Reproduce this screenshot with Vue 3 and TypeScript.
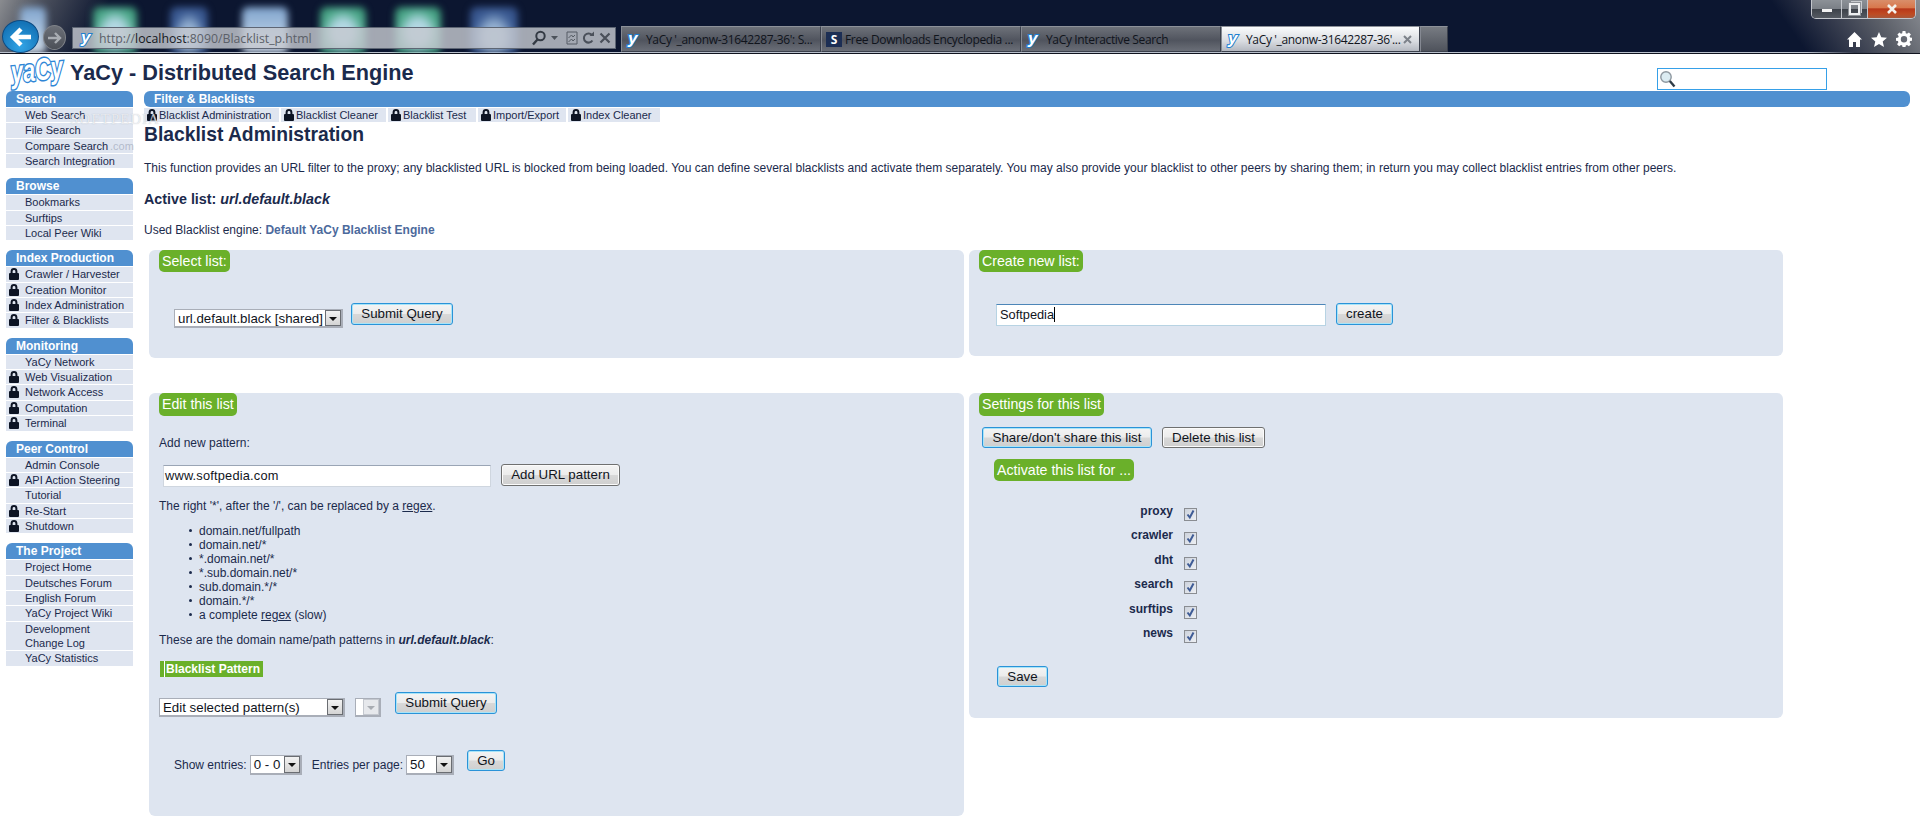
<script setup lang="ts">
interface NavItem { label: string; lock?: boolean }
interface NavGroup { title: string; items: NavItem[] }

const groups: NavGroup[] = [
  { title: 'Search', items: [{ label: 'Web Search' }, { label: 'File Search' }, { label: 'Compare Search' }, { label: 'Search Integration' }] },
  { title: 'Browse', items: [{ label: 'Bookmarks' }, { label: 'Surftips' }, { label: 'Local Peer Wiki' }] },
  { title: 'Index Production', items: [
    { label: 'Crawler / Harvester', lock: true }, { label: 'Creation Monitor', lock: true },
    { label: 'Index Administration', lock: true }, { label: 'Filter & Blacklists', lock: true }] },
  { title: 'Monitoring', items: [
    { label: 'YaCy Network' }, { label: 'Web Visualization', lock: true }, { label: 'Network Access', lock: true },
    { label: 'Computation', lock: true }, { label: 'Terminal', lock: true }] },
  { title: 'Peer Control', items: [
    { label: 'Admin Console' }, { label: 'API Action Steering', lock: true }, { label: 'Tutorial' },
    { label: 'Re-Start', lock: true }, { label: 'Shutdown', lock: true }] },
  { title: 'The Project', items: [
    { label: 'Project Home' }, { label: 'Deutsches Forum' }, { label: 'English Forum' }, { label: 'YaCy Project Wiki' },
    { label: 'Development Change Log' }, { label: 'YaCy Statistics' }] },
]

const subMenu = [
  { label: 'Blacklist Administration', width: 135 },
  { label: 'Blacklist Cleaner', width: 105 },
  { label: 'Blacklist Test', width: 88 },
  { label: 'Import/Export', width: 88 },
  { label: 'Index Cleaner', width: 92 },
]

const patterns = ['domain.net/fullpath', 'domain.net/*', '*.domain.net/*', '*.sub.domain.net/*', 'sub.domain.*/*', 'domain.*/*']
const activations = ['proxy', 'crawler', 'dht', 'search', 'surftips', 'news']
const thumbs = [
  { cls: 'pale', left: 20, width: 26 },
  { cls: 'green', left: 93, width: 44 },
  { cls: 'blue', left: 170, width: 38 },
  { cls: 'pale', left: 242, width: 46 },
  { cls: 'green', left: 320, width: 46 },
  { cls: 'green', left: 395, width: 46 },
  { cls: 'blue', left: 470, width: 48 },
]
const tabs = [
  { title: "YaCy '_anonw-31642287-36': S...", icon: 'y' },
  { title: 'Free Downloads Encyclopedia ...', icon: 's' },
  { title: 'YaCy Interactive Search', icon: 'y' },
]
</script>

<template>
  <div class="window">
    <svg class="defs" width="0" height="0" aria-hidden="true">
      <symbol id="lock" viewBox="0 0 10 12">
        <path d="M1.600 5V3.400a3.400 3.400 0 0 1 6.800 0V5h.6a1 1 0 0 1 1 1v5a1 1 0 0 1-1 1H1a1 1 0 0 1-1-1V6a1 1 0 0 1 1-1Zm2 0h2.800V3.400a1.400 1.400 0 0 0-2.800 0Z" fill="#0d1424" fill-rule="evenodd" />
      </symbol>
    </svg>

    <header class="chrome">
      <div v-for="(t, i) in thumbs" :key="i" class="thumb" :class="t.cls" :style="{ left: t.left + 'px', width: t.width + 'px' }"></div>
      <div class="corner"></div>

      <div class="controls">
        <span class="ctl min"><i></i></span>
        <span class="ctl restore"><i></i></span>
        <span class="ctl close">
          <svg width="14" height="10" viewBox="0 0 14 10"><path d="M3 1l8 8M11 1l-8 8" stroke="#f4f0ea" stroke-width="2.600" /></svg>
        </span>
      </div>

      <div class="nav-row">
        <span class="back">
          <svg width="24" height="22" viewBox="0 0 24 22"><path d="M22 11H5M12 3l-8 8 8 8" fill="none" stroke="#fff" stroke-width="4.400" /></svg>
        </span>
        <span class="forward">
          <svg width="16" height="14" viewBox="0 0 16 14"><path d="M1 7h12M8 2l5 5-5 5" fill="none" stroke="#a9adb3" stroke-width="2.400" /></svg>
        </span>

        <div class="address">
          <svg class="favicon" width="13" height="17" viewBox="0 0 13 17"><text x="1" y="13" class="fav-text">y</text></svg>
          <span class="url">http://<b>localhost</b>:8090/Blacklist_p.html</span>
          <span class="addr-tools">
            <svg width="16" height="16" viewBox="0 0 16 16"><circle cx="9.500" cy="6" r="4.200" fill="none" stroke="#333a44" stroke-width="2" /><path d="M6.500 9.500 2 14.500" stroke="#333a44" stroke-width="2.400" /></svg>
            <svg class="caret" width="7" height="4" viewBox="0 0 7 4"><path d="M0 0h7L3.500 4Z" fill="#4c525b" /></svg>
            <svg class="compat" width="12" height="14" viewBox="0 0 12 14"><path d="M1 1h10v12H1Z" fill="none" stroke="#555b64" /><path d="M2.500 7l3-3 1.500 2 2-2M2.500 11l3-3 1.500 2 2-2" fill="none" stroke="#555b64" /></svg>
            <svg width="13" height="14" viewBox="0 0 13 14"><path d="M10.400 9.500A4.600 4.600 0 1 1 10 4" fill="none" stroke="#4a505a" stroke-width="2" /><path d="M7.500 5H12V.5Z" fill="#4a505a" /></svg>
            <svg width="12" height="12" viewBox="0 0 12 12"><path d="M1.500 1.500l9 9M10.500 1.500l-9 9" stroke="#4a505a" stroke-width="2.200" /></svg>
          </span>
        </div>

        <div class="tabs">
          <div v-for="t in tabs" :key="t.title" class="tab">
            <svg v-if="t.icon === 'y'" class="favicon" width="13" height="17" viewBox="0 0 13 17"><text x="1" y="13" class="fav-text">y</text></svg>
            <span v-else class="s-icon">S</span>
            <span class="tab-title">{{ t.title }}</span>
          </div>
          <div class="tab active">
            <svg class="favicon" width="13" height="17" viewBox="0 0 13 17"><text x="1" y="13" class="fav-text">y</text></svg>
            <span class="tab-title">YaCy '_anonw-31642287-36'...</span>
            <svg class="tab-x" width="9" height="9" viewBox="0 0 9 9"><path d="M1 1l7 7M8 1 1 8" stroke="#7d828a" stroke-width="2" /></svg>
          </div>
          <div class="tab new-tab"></div>
        </div>

        <div class="tools">
          <svg width="15" height="15" viewBox="0 0 15 15"><path d="M7.500 0 15 7.500h-2V15H9v-5H6v5H2V7.500H0Z" fill="#fff" /></svg>
          <svg width="16" height="15" viewBox="0 0 16 15"><path d="M8 0l2.300 5.200 5.700.5-4.300 3.700 1.300 5.600L8 12l-5 3 1.300-5.600L0 5.700l5.700-.5Z" fill="#fff" /></svg>
          <svg width="16" height="16" viewBox="0 0 16 16"><path d="M6.600 0h2.800l.4 2.200 1.200.5L12.900 1.400l2 2-1.300 1.900.5 1.200 2.200.4v2.800l-2.200.4-.5 1.200 1.300 1.900-2 2-1.900-1.300-1.200.5-.4 2.200H6.600l-.4-2.200-1.200-.5-1.900 1.300-2-2 1.300-1.900-.5-1.200L0 9.700V6.900l2.200-.4.5-1.200L1.400 3.400l2-2L5 2.700l1.200-.5ZM8 5a3.200 3.200 0 1 0 0 6.400A3.200 3.200 0 0 0 8 5Z" fill="#fff" fill-rule="evenodd" /></svg>
        </div>
      </div>
    </header>

    <div class="page">
      <div class="watermark">SOFTPEDIA</div>
      <div class="watermark-small">.com</div>

      <div class="top">
        <svg class="logo" width="56" height="33" viewBox="0 0 56 33">
          <g transform="translate(2 27) rotate(-6) scale(1 1.150)">
            <text x="0" y="0" textLength="52" lengthAdjust="spacingAndGlyphs" class="logo-text">yaCy</text>
          </g>
        </svg>
        <h1>YaCy - Distributed Search Engine</h1>
        <div class="search-box">
          <svg width="17" height="18" viewBox="0 0 17 18">
            <circle cx="7" cy="7" r="5.200" fill="#dcecf2" stroke="#8d979f" stroke-width="1.400" />
            <path d="M10.800 11l4.700 5.500" stroke="#2f3b46" stroke-width="2.400" />
          </svg>
        </div>
      </div>

      <div class="columns">
        <nav class="sidebar">
          <section v-for="g in groups" :key="g.title" class="group">
            <h3>{{ g.title }}</h3>
            <a v-for="it in g.items" :key="it.label" class="nav-item">
              <svg v-if="it.lock" class="lock" width="10" height="12"><use href="#lock" /></svg>
              {{ it.label }}
            </a>
          </section>
        </nav>

        <main class="main">
          <div class="bar">Filter &amp; Blacklists</div>
          <div class="sub">
            <a v-for="s in subMenu" :key="s.label" class="sub-item" :style="{ width: s.width + 'px' }">
              <svg class="sub-lock" width="10" height="12"><use href="#lock" /></svg>{{ s.label }}
            </a>
          </div>

          <h2>Blacklist Administration</h2>
          <p class="intro">This function provides an URL filter to the proxy; any blacklisted URL is blocked from being loaded. You can define several blacklists and activate them separately. You may also provide your blacklist to other peers by sharing them; in return you may collect blacklist entries from other peers.</p>
          <h4>Active list: <em>url.default.black</em></h4>
          <p class="engine">Used Blacklist engine: <b>Default YaCy Blacklist Engine</b></p>

          <div class="panels">
            <section class="panel p-select">
              <div class="legend">Select list:</div>
              <div class="row select-row">
                <div class="sel s-list"><span>url.default.black [shared]</span><i class="arrow"></i></div>
                <button class="btn focus b-submit1">Submit Query</button>
              </div>
            </section>

            <section class="panel p-create">
              <div class="legend">Create new list:</div>
              <div class="row create-row">
                <div class="text-input create-input">Softpedia<i class="cursor"></i></div>
                <button class="btn focus b-create">create</button>
              </div>
            </section>

            <section class="panel p-edit">
              <div class="legend">Edit this list</div>
              <p class="t-add">Add new pattern:</p>
              <div class="row add-row">
                <div class="text-input add-input">www.softpedia.com</div>
                <button class="btn b-add">Add URL pattern</button>
              </div>
              <p class="t-right">The right '*', after the '/', can be replaced by a <a class="u">regex</a>.</p>
              <ul class="patterns">
                <li v-for="p in patterns" :key="p">{{ p }}</li>
                <li>a complete <a class="u">regex</a> (slow)</li>
              </ul>
              <p class="t-these">These are the domain name/path patterns in <b><em>url.default.black</em></b>:</p>
              <div class="pattern-head"><span>Blacklist Pattern</span></div>
              <div class="row action-row">
                <div class="sel s-action"><span>Edit selected pattern(s)</span><i class="arrow"></i></div>
                <div class="sel s-disabled"><span></span><i class="arrow off"></i></div>
                <button class="btn focus b-submit2">Submit Query</button>
              </div>
              <div class="row entries-row">
                <span class="lbl-show">Show entries:</span>
                <div class="sel s-range"><span>0 - 0</span><i class="arrow"></i></div>
                <span class="lbl-per">Entries per page:</span>
                <div class="sel s-per"><span>50</span><i class="arrow"></i></div>
                <button class="btn focus b-go">Go</button>
              </div>
            </section>

            <section class="panel p-settings">
              <div class="legend">Settings for this list</div>
              <div class="row settings-btns">
                <button class="btn focus b-share">Share/don't share this list</button>
                <button class="btn b-delete">Delete this list</button>
              </div>
              <div class="legend sub-legend">Activate this list for ...</div>
              <div class="checks">
                <template v-for="a in activations" :key="a">
                  <b class="check-label">{{ a }}</b>
                  <span class="check">
                    <svg width="11" height="11" viewBox="0 0 11 11"><path d="M2.500 5.500l2.300 3L8.500 1.500" fill="none" stroke="#3f5c96" stroke-width="2" /></svg>
                  </span>
                </template>
              </div>
              <button class="btn focus b-save">Save</button>
            </section>
          </div>
        </main>
      </div>
    </div>
  </div>
</template>

<style>
html, body { margin: 0; background: #fff; overflow: hidden; }
</style>

<style scoped>
.window { width: 1920px; height: 821px; overflow: hidden; font-family: "Liberation Sans", Arial, sans-serif; color: #1b2a4c; background: #fff; }
.defs { position: absolute; }

/* browser chrome */
.chrome { position: relative; height: 54px; box-sizing: border-box; overflow: hidden; background: linear-gradient(115deg, #8a8c90 0, #4a4f5c 40px, #0c1630 100px); border-bottom: 1px solid #10141f; box-shadow: inset 0 -1px 0 #b9c0cc; }
.thumb { position: absolute; top: 7px; height: 46px; border-radius: 6px; filter: blur(3.500px); }
.thumb.pale { background: linear-gradient(#7fa3cc, #a9c3df 50%, #cfdbe8); }
.thumb.green { background: radial-gradient(ellipse at 50% 55%, #b4d8e4 0 30%, #4ea98c 62%, #328a6c); }
.thumb.blue { background: radial-gradient(ellipse at 50% 65%, #98b4d4 0 28%, #3c5c94 60%, #2f4a80); }
.corner { position: absolute; right: 0; top: 0; width: 190px; height: 53px; background: linear-gradient(235deg, #8b8e94 0, #5c6069 24%, #343a4c 45%, rgba(12, 22, 48, 0) 66%); }

.controls { position: absolute; right: 4px; top: -1px; display: flex; height: 19px; border: 1px solid #c3c6cc; border-top: 0; border-radius: 0 0 5px 5px; overflow: hidden; }
.ctl { display: flex; align-items: center; justify-content: center; box-sizing: border-box; background: linear-gradient(#8e9399, #7b8087 50%, #3c4149 52%, #555a62); }
.min { width: 30px; border-right: 1px solid #c3c6cc; }
.min i { display: block; width: 10px; height: 3px; background: #f2f2f2; margin-top: 3px; }
.restore { width: 26px; border-right: 1px solid #c3c6cc; }
.restore i { display: block; width: 7px; height: 8px; border: 2px solid #eceef0; outline: 1px solid #8d9197; box-shadow: 2px -2px 0 0 #c9ccd0; }
.close { width: 47px; background: linear-gradient(#d9916e, #d8774c 46%, #b8381a 52%, #bf4a22 78%, #a8583a); }

.nav-row { position: relative; display: flex; align-items: flex-end; height: 53px; padding-left: 2px; }
.back { display: flex; align-items: center; justify-content: center; width: 37px; height: 33px; border-radius: 50%; background: radial-gradient(circle at 50% 80%, #32a4e6, #1474b8 75%); border: 1px solid #0c4a82; box-sizing: border-box; }
.forward { display: flex; align-items: center; justify-content: center; width: 23px; height: 25px; margin: 0 0 3px 4px; border-radius: 50%; background: linear-gradient(#6c7078, #4c5058); border: 1px solid #80848a; box-sizing: border-box; }
.address { display: flex; align-items: center; box-sizing: border-box; width: 544px; height: 22px; margin: 0 0 4px 6px; padding-left: 7px; background: rgba(196, 200, 208, 0.82); border: 1px solid #5e6674; }
.favicon { flex: none; overflow: visible; }
.fav-text { font: italic 700 17px "Liberation Sans", sans-serif; fill: #fff; stroke: #1f7fd0; stroke-width: 2; paint-order: stroke; }
.url { margin-left: 6px; font: 12.300px "Open Sans", sans-serif; color: #5b6068; }
.url b { font-weight: 400; color: #14171c; }
.addr-tools { display: flex; align-items: center; gap: 4px; margin-left: auto; padding: 0 4px 0 0; }
.caret { margin-right: 4px; }
.tabs { display: flex; align-items: stretch; height: 26px; margin: 0 0 1px 5px; }
.tab { display: flex; align-items: center; box-sizing: border-box; width: 200px; padding-left: 5px; background: linear-gradient(#6d7179, #50545e 55%, #6a6e77); border: 1px solid #3b404c; border-top-color: #8d9199; border-left-color: #858992; color: #10141c; font: 12px "Open Sans", sans-serif; letter-spacing: -0.350px; white-space: nowrap; overflow: hidden; }
.tab-title { margin-left: 6px; }
.tab.active { width: 199px; background: linear-gradient(#fafbfc, #d8dbe0 60%, #b4b8c0); position: relative; }
.tab-x { position: absolute; right: 7px; top: 8px; }
.new-tab { width: 28px; padding: 0; background: linear-gradient(#777b82, #4f535c); }
.s-icon { display: flex; align-items: center; justify-content: center; width: 16px; height: 15px; background: #1c2e54; color: #fff; font: 700 12px "Open Sans", sans-serif; flex: none; margin: 0 -3px 0 -1px; }
.tools { position: absolute; right: 8px; bottom: 6px; display: flex; align-items: center; gap: 9px; }

/* page */
.page { position: relative; }
.watermark { position: absolute; left: 70px; top: 57px; font: 15px/16px "Liberation Serif", serif; letter-spacing: 1px; color: rgba(255, 255, 255, 0.7); text-shadow: 0 0 1px rgba(120, 130, 150, 0.5); pointer-events: none; z-index: 2; }
.watermark-small { position: absolute; left: 110px; top: 85px; font: 11px/14px "Liberation Sans", sans-serif; color: rgba(140, 150, 170, 0.55); pointer-events: none; z-index: 2; }

.top { display: flex; align-items: flex-start; height: 37px; padding-left: 10px; }
.logo { flex: none; margin-top: 2px; overflow: visible; }
.logo-text { font: italic 700 27px "Liberation Sans", sans-serif; fill: #fff; stroke: #2f86d6; stroke-width: 2.600; paint-order: stroke; }
h1 { margin: 5px 0 0 4px; font-size: 21.700px; line-height: 28px; font-weight: 700; color: #1b2a4c; white-space: nowrap; }
.search-box { box-sizing: border-box; width: 170px; height: 22px; margin: 14px 93px 0 auto; border: 1px solid #36a0e8; background: #fff; padding: 1px 0 0 1px; }

.columns { display: flex; padding-left: 6px; gap: 11px; }
.sidebar { flex: none; width: 127px; display: flex; flex-direction: column; gap: 10px; }
.group { display: flex; flex-direction: column; gap: 1px; }
.group h3 { margin: 0; height: 16px; padding-left: 10px; border-radius: 6px 6px 0 0; background: #5090d0; color: #fff; font-size: 12px; line-height: 16px; font-weight: 700; }
.nav-item { position: relative; display: block; min-height: 14.340px; padding: 0 8px 0 19px; background: #dfe5f0; font-size: 11px; line-height: 14.340px; color: #1b2a4c; }
.lock { position: absolute; left: 3px; top: 1px; }

.main { flex: none; width: 1766px; }
.bar { height: 16px; padding-left: 10px; border-radius: 6px; background: #5090d0; color: #fff; font-size: 12px; line-height: 16px; font-weight: 700; }
.sub { display: flex; margin-top: 1px; gap: 2px; height: 14px; }
.sub-item { box-sizing: border-box; padding-left: 3px; background: #dfe5f0; font-size: 11px; line-height: 14px; white-space: nowrap; }
.sub-lock { margin-right: 2px; vertical-align: -2px; }
.main h2 { margin: 2px 0 0; font-size: 19.300px; line-height: 22px; font-weight: 700; }
.intro { margin: 15px 0 0; font-size: 12px; line-height: 14px; white-space: nowrap; }
.main h4 { margin: 15px 0 0; font-size: 14.300px; line-height: 18px; font-weight: 700; }
.engine { margin: 15px 0 0; font-size: 12px; line-height: 14px; }
.engine b { color: #4c6a9c; }

.panels { display: grid; grid-template-columns: 815px 814px; column-gap: 5px; row-gap: 35px; align-items: start; margin: 13px 0 0 5px; }
.panel { box-sizing: border-box; padding: 0 10px; background: #dee5f0; border-radius: 6px; font-size: 12px; }
.p-select { height: 108px; }
.p-create { height: 106px; }
.p-edit { height: 423px; }
.p-settings { height: 325px; }
.legend { width: fit-content; height: 22px; padding: 0 3px; border-radius: 5px; background: #6ab02a; color: #fff; font-size: 14.200px; line-height: 22px; }
.p-edit .legend, .p-settings > .legend:first-child { height: 23px; line-height: 23px; }
.panel p { margin: 0; line-height: 14px; }
.row { display: flex; align-items: flex-start; }

.btn { box-sizing: border-box; height: 22px; padding: 0; border: 1px solid #6f7070; border-radius: 3px; background: linear-gradient(#f4f4f4 0, #ececec 48%, #d8d8d8 52%, #cfcfcf 100%); box-shadow: inset 0 0 0 1px #fbfbfb; color: #10141c; font: 13.300px/18px "Liberation Sans", sans-serif; text-align: center; }
.btn.focus { border-color: #2a93d8; box-shadow: inset 0 0 0 1px #a8e4f8; }
.sel { display: flex; align-items: center; box-sizing: border-box; height: 19px; background: #fff; border: 1px solid #a9aeb8; border-right-width: 2px; border-bottom-width: 2px; font-size: 13.300px; color: #10141c; }
.sel span { flex: 1; padding-left: 3px; white-space: nowrap; overflow: hidden; }
.arrow { position: relative; flex: none; box-sizing: border-box; width: 16px; height: 100%; border: 1px solid #6a6d72; background: linear-gradient(#f2f2f2, #d4d4d4); }
.arrow::after { content: ""; position: absolute; left: 3px; top: 6px; border: 4px solid transparent; border-top: 4px solid #111; border-bottom: 0; }
.arrow.off { border-color: #c4c8cf; background: #e6e8ec; }
.arrow.off::after { border-top-color: #a8acb2; }
.text-input { box-sizing: border-box; height: 22px; background: #fff; border: 1px solid #cfd6df; border-top-color: #9aa5b5; font-size: 12.800px; line-height: 20px; padding-left: 2px; color: #10141c; white-space: nowrap; }
.cursor { display: inline-block; width: 1px; height: 15px; background: #000; vertical-align: -3px; }

.select-row { margin: 31px 0 0 15px; }
.s-list { width: 169px; margin-top: 6px; }
.b-submit1 { width: 102px; margin-left: 8px; }
.create-row { margin: 32px 0 0 17px; }
.create-input { width: 330px; border-color: #b7d3e3; border-top-color: #4d86b8; padding-left: 3px; }
.b-create { width: 57px; margin-left: 10px; margin-top: -1px; }

.t-add { margin-top: 20px !important; }
.add-row { margin: 14px 0 0 4px; }
.add-input { width: 328px; padding-left: 1px; margin-top: 1px; letter-spacing: 0.200px; }
.b-add { width: 119px; margin-left: 10px; }
.t-right { margin-top: 12px !important; }
.u { text-decoration: underline; }
.patterns { margin: 11px 0 0; padding: 0 0 0 40px; list-style: none; line-height: 14px; }
.patterns li::before { content: ""; display: inline-block; width: 3px; height: 3px; margin: 0 7px 3px -10px; border-radius: 50%; background: #1b2a4c; }
.t-these { margin-top: 11px !important; }
.pattern-head { width: 103px; height: 16px; margin: 14px 0 0 1px; background: #6ab02a; color: #fff; font-size: 12px; font-weight: 700; line-height: 16px; box-sizing: border-box; padding-left: 4px; position: relative; }
.pattern-head::before { content: ""; position: absolute; left: 4px; top: 0; bottom: 0; width: 1px; background: #fff; }
.pattern-head span { margin-left: 2px; white-space: nowrap; }
.action-row { margin-top: 15px; }
.s-action { width: 186px; margin-top: 6px; }
.s-disabled { width: 26px; margin: 6px 0 0 10px; }
.s-disabled span { padding: 0; }
.b-submit2 { width: 102px; margin-left: 14px; }
.entries-row { margin: 33px 0 0 15px; }
.lbl-show, .lbl-per { margin-top: 8px; line-height: 14px; }
.s-range { width: 52px; height: 20px; margin: 5px 0 0 3px; }
.lbl-per { margin-left: 10px; }
.s-per { width: 48px; height: 20px; margin: 5px 0 0 3px; }
.b-go { width: 38px; height: 21px; margin-left: 13px; }

.settings-btns { margin: 11px 0 0 3px; gap: 10px; }
.b-share { width: 170px; height: 21px; }
.b-delete { width: 103px; height: 21px; }
.sub-legend { margin: 11px 0 0 15px; }
.checks { display: grid; grid-template-columns: 194px 13px; grid-auto-rows: 24.400px; column-gap: 11px; margin-top: 19px; }
.check-label { text-align: right; line-height: 22.400px; font-size: 12px; }
.check { display: flex; align-items: center; justify-content: center; box-sizing: border-box; width: 13px; height: 13px; margin-top: 8px; border: 1px solid #8a8d92; background: linear-gradient(135deg, #ccd2dc, #eef0f4); }
.b-save { display: block; width: 51px; height: 21px; margin: 20px 0 0 18px; }
</style>
